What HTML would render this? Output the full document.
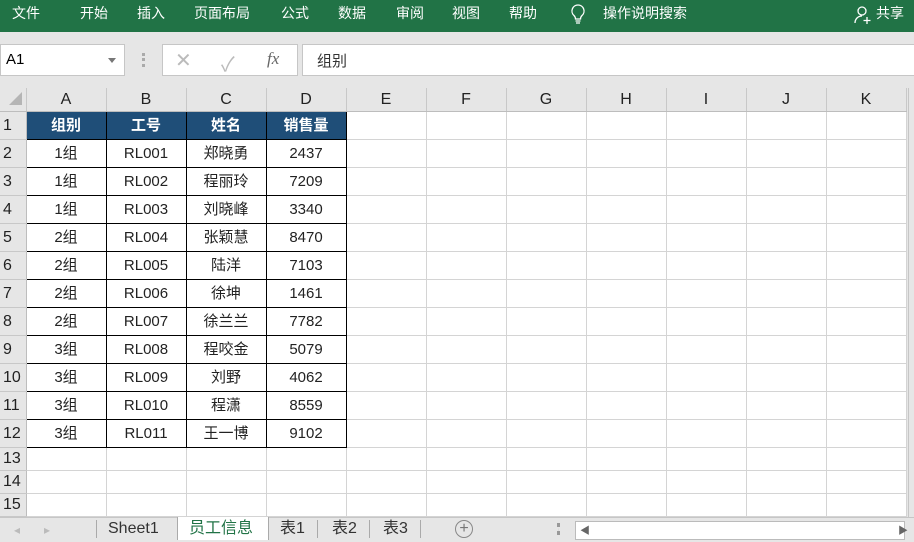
<!DOCTYPE html>
<html><head><meta charset="utf-8"><style>
*{margin:0;padding:0;box-sizing:border-box}
body{width:914px;height:539px;overflow:hidden;background:#e6e6e6;font-family:"Liberation Sans","Noto Sans CJK SC",sans-serif;position:relative}
.rib{position:absolute;left:0;top:0;width:914px;height:32px;background:#217346;color:#fff;font-size:14px}
.rib span{position:absolute;top:4px;line-height:18px}
.box{position:absolute;background:#fff;border:1px solid #c6c6c6}
table{position:absolute;left:0;top:88px;border-collapse:collapse;table-layout:fixed}
td{height:28px;border-right:1px solid #d4d4d4;border-bottom:1px solid #d4d4d4;background:#fff;font-size:15px;text-align:center;padding:0;color:#222;overflow:hidden;white-space:nowrap;line-height:18px}
tr.h td{height:23px;background:#e6e6e6;color:#222;font-size:16px;border-right:1px solid #c8c8c8;border-bottom:1px solid #bdbdbd}
td.rh{background:#e6e6e6;text-align:left;padding-left:3px;font-size:16px;border-right:1px solid #bdbdbd;border-bottom:1px solid #c8c8c8}
tr.s td{height:23px}
td.hd{background:#1f4e78;color:#fff;font-weight:bold;border:1px solid #000}
td.d{border:1px solid #000}
.tabs{position:absolute;left:0;top:517px;width:914px;height:22px;background:#e6e6e6;border-top:1px solid #c6c6c6;font-size:16px;color:#333}
.tabs span{position:absolute;top:1px;line-height:20px}
</style></head><body>
<div class="rib">
<span style="left:12px">文件</span><span style="left:80px">开始</span><span style="left:137px">插入</span><span style="left:194px">页面布局</span><span style="left:281px">公式</span><span style="left:338px">数据</span><span style="left:396px">审阅</span><span style="left:452px">视图</span><span style="left:509px">帮助</span>
<svg style="position:absolute;left:570px;top:4px" width="16" height="20" viewBox="0 0 16 20"><path d="M8 1a6 6 0 0 0-4 10.5c1 1 1.5 2 1.5 3.5h5c0-1.5.5-2.5 1.5-3.5A6 6 0 0 0 8 1zM5.5 17h5M6 19h4" fill="none" stroke="#fff" stroke-width="1.3"/></svg>
<span style="left:603px">操作说明搜索</span>
<svg style="position:absolute;left:853px;top:5px" width="20" height="20" viewBox="0 0 20 20"><circle cx="9" cy="6" r="4" fill="none" stroke="#fff" stroke-width="1.3"/><path d="M2 18c0-4 3-7 7-7M14 12v7M10.5 15.5h7" fill="none" stroke="#fff" stroke-width="1.3"/></svg>
<span style="left:876px">共享</span>
</div>
<div class="box" style="left:0;top:44px;width:125px;height:32px;font-size:15px;padding:6px 5px">A1<span style="position:absolute;right:8px;top:13px;border:4px solid transparent;border-top:5px solid #777"></span></div>
<div style="position:absolute;left:142px;top:53px;width:3px;height:14px;border-left:3px dotted #aaa"></div>
<div class="box" style="left:162px;top:44px;width:136px;height:32px;color:#999">
<span style="position:absolute;left:12px;top:3px;font-size:20px;color:#bbb">✕</span>
<span style="position:absolute;left:58px;top:3px;font-size:20px;color:#bbb">✓</span>
<span style="position:absolute;left:104px;top:4px;font-size:17px;font-style:italic;font-family:'Liberation Serif',serif;color:#666">fx</span></div>
<div class="box" style="left:302px;top:44px;width:620px;height:32px;font-size:15px;padding:5px 14px;color:#333">组别</div>
<table>
<colgroup><col style="width:26px"><col style="width:80px"><col style="width:80px"><col style="width:80px"><col style="width:80px"><col style="width:80px"><col style="width:80px"><col style="width:80px"><col style="width:80px"><col style="width:80px"><col style="width:80px"><col style="width:80px"></colgroup>
<tr class="h"><td style="background:#e6e6e6"><svg width="20" height="18"><path d="M19 4V17H6z" fill="#b5b5b5"/></svg></td><td>A</td><td>B</td><td>C</td><td>D</td><td>E</td><td>F</td><td>G</td><td>H</td><td>I</td><td>J</td><td>K</td></tr>
<tr><td class="rh">1</td><td class="hd">组别</td><td class="hd">工号</td><td class="hd">姓名</td><td class="hd">销售量</td><td></td><td></td><td></td><td></td><td></td><td></td><td></td></tr>
<tr><td class="rh">2</td><td class="d">1组</td><td class="d">RL001</td><td class="d">郑晓勇</td><td class="d">2437</td><td></td><td></td><td></td><td></td><td></td><td></td><td></td></tr>
<tr><td class="rh">3</td><td class="d">1组</td><td class="d">RL002</td><td class="d">程丽玲</td><td class="d">7209</td><td></td><td></td><td></td><td></td><td></td><td></td><td></td></tr>
<tr><td class="rh">4</td><td class="d">1组</td><td class="d">RL003</td><td class="d">刘晓峰</td><td class="d">3340</td><td></td><td></td><td></td><td></td><td></td><td></td><td></td></tr>
<tr><td class="rh">5</td><td class="d">2组</td><td class="d">RL004</td><td class="d">张颖慧</td><td class="d">8470</td><td></td><td></td><td></td><td></td><td></td><td></td><td></td></tr>
<tr><td class="rh">6</td><td class="d">2组</td><td class="d">RL005</td><td class="d">陆洋</td><td class="d">7103</td><td></td><td></td><td></td><td></td><td></td><td></td><td></td></tr>
<tr><td class="rh">7</td><td class="d">2组</td><td class="d">RL006</td><td class="d">徐坤</td><td class="d">1461</td><td></td><td></td><td></td><td></td><td></td><td></td><td></td></tr>
<tr><td class="rh">8</td><td class="d">2组</td><td class="d">RL007</td><td class="d">徐兰兰</td><td class="d">7782</td><td></td><td></td><td></td><td></td><td></td><td></td><td></td></tr>
<tr><td class="rh">9</td><td class="d">3组</td><td class="d">RL008</td><td class="d">程咬金</td><td class="d">5079</td><td></td><td></td><td></td><td></td><td></td><td></td><td></td></tr>
<tr><td class="rh">10</td><td class="d">3组</td><td class="d">RL009</td><td class="d">刘野</td><td class="d">4062</td><td></td><td></td><td></td><td></td><td></td><td></td><td></td></tr>
<tr><td class="rh">11</td><td class="d">3组</td><td class="d">RL010</td><td class="d">程潇</td><td class="d">8559</td><td></td><td></td><td></td><td></td><td></td><td></td><td></td></tr>
<tr><td class="rh">12</td><td class="d">3组</td><td class="d">RL011</td><td class="d">王一博</td><td class="d">9102</td><td></td><td></td><td></td><td></td><td></td><td></td><td></td></tr>
<tr class="s"><td class="rh">13</td><td></td><td></td><td></td><td></td><td></td><td></td><td></td><td></td><td></td><td></td><td></td></tr>
<tr class="s"><td class="rh">14</td><td></td><td></td><td></td><td></td><td></td><td></td><td></td><td></td><td></td><td></td><td></td></tr>
<tr class="s"><td class="rh">15</td><td></td><td></td><td></td><td></td><td></td><td></td><td></td><td></td><td></td><td></td><td></td></tr>
</table>
<div style="position:absolute;left:908px;top:88px;width:6px;height:430px;background:#e6e6e6;border-left:1px solid #c6c6c6"></div>
<div class="tabs">
<span style="left:14px;color:#bbb;font-size:12px;top:2px">◂</span><span style="left:44px;color:#bbb;font-size:12px;top:2px">▸</span>
<div style="position:absolute;left:96px;top:2px;width:1px;height:18px;background:#aaa"></div>
<span style="left:108px">Sheet1</span>
<div style="position:absolute;left:177px;top:-1px;width:92px;height:23px;background:#fff;border-left:1px solid #aaa;border-right:1px solid #aaa"></div>
<span style="left:189px;color:#217346">员工信息</span>
<span style="left:280px">表1</span><div style="position:absolute;left:317px;top:2px;width:1px;height:18px;background:#aaa"></div>
<span style="left:332px">表2</span><div style="position:absolute;left:369px;top:2px;width:1px;height:18px;background:#aaa"></div>
<span style="left:383px">表3</span><div style="position:absolute;left:420px;top:2px;width:1px;height:18px;background:#aaa"></div>
<div style="position:absolute;left:455px;top:2px;width:18px;height:18px;border:1px solid #888;border-radius:50%;text-align:center;line-height:15px;font-size:16px;color:#777">+</div>
<div style="position:absolute;left:557px;top:5px;width:3px;height:12px;border-left:3px dotted #999"></div>
<div style="position:absolute;left:575px;top:3px;width:330px;height:19px;background:#fff;border:1px solid #bbb"></div>
<span style="left:580px;font-size:10px;top:4px;color:#666">◀</span>
<span style="left:898px;font-size:10px;top:4px;color:#666">▶</span>
</div>
</body></html>
